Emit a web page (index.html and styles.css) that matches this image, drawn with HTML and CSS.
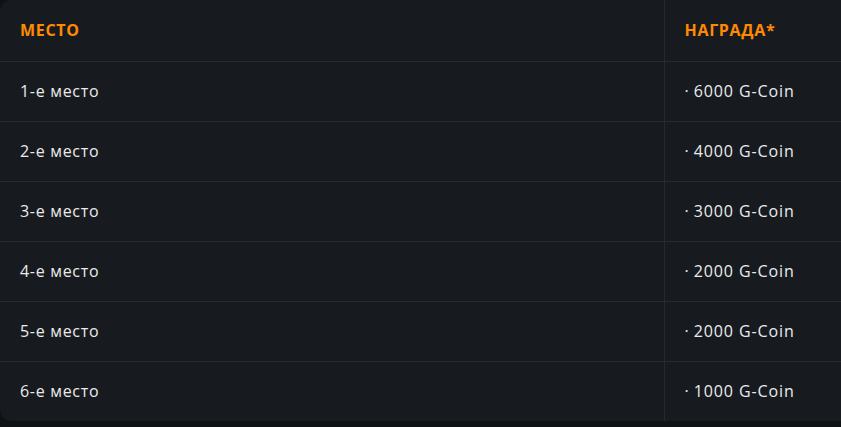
FILE: index.html
```html
<!DOCTYPE html>
<html lang="ru">
<head>
<meta charset="utf-8">
<link rel="stylesheet" href="styles.css">
</head>
<body>
<div class="wrap">
  <table class="prizes">
    <thead>
      <tr><th class="c1">МЕСТО</th><th class="c2">НАГРАДА*</th></tr>
    </thead>
    <tbody>
      <tr><td class="c1">1-е место</td><td class="c2"><span class="dot">·</span>6000 G-Coin</td></tr>
      <tr><td class="c1">2-е место</td><td class="c2"><span class="dot">·</span>4000 G-Coin</td></tr>
      <tr><td class="c1">3-е место</td><td class="c2"><span class="dot">·</span>3000 G-Coin</td></tr>
      <tr><td class="c1">4-е место</td><td class="c2"><span class="dot">·</span>2000 G-Coin</td></tr>
      <tr><td class="c1">5-е место</td><td class="c2"><span class="dot">·</span>2000 G-Coin</td></tr>
      <tr><td class="c1">6-е место</td><td class="c2"><span class="dot">·</span>1000 G-Coin</td></tr>
    </tbody>
  </table>
</div>
</body>
</html>
```

FILE: styles.css
```css
html, body {
  margin: 0;
  padding: 0;
  background: #0f1215;
  font-family: "Open Sans", "DejaVu Sans", sans-serif;
}
.wrap {
  width: 880px;
  height: 421px;
  background: #171b20;
  border-radius: 12px 0 0 12px;
  overflow: hidden;
}
.prizes {
  width: 880px;
  border-collapse: collapse;
  table-layout: fixed;
}
.prizes th, .prizes td {
  height: 60px;
  padding: 0 0 0 20px;
  text-align: left;
  vertical-align: middle;
  border-bottom: 1px solid #262a2f;
  box-sizing: border-box;
}
.prizes tbody tr:last-child td { border-bottom: none; }
.prizes .c1 { width: 664px; border-right: 1px solid #262a2f; }
.prizes th {
  color: #ff8a00;
  font-weight: 700;
  font-size: 16px;
  letter-spacing: 0.7px;
  height: 61px;
}
.prizes td {
  color: #ebebeb;
  font-size: 16px;
  letter-spacing: 0.7px;
  font-weight: 400;
}
.prizes td.c2 { letter-spacing: 0.9px; }
.dot { margin-right: 5px; letter-spacing: 0; }
```
